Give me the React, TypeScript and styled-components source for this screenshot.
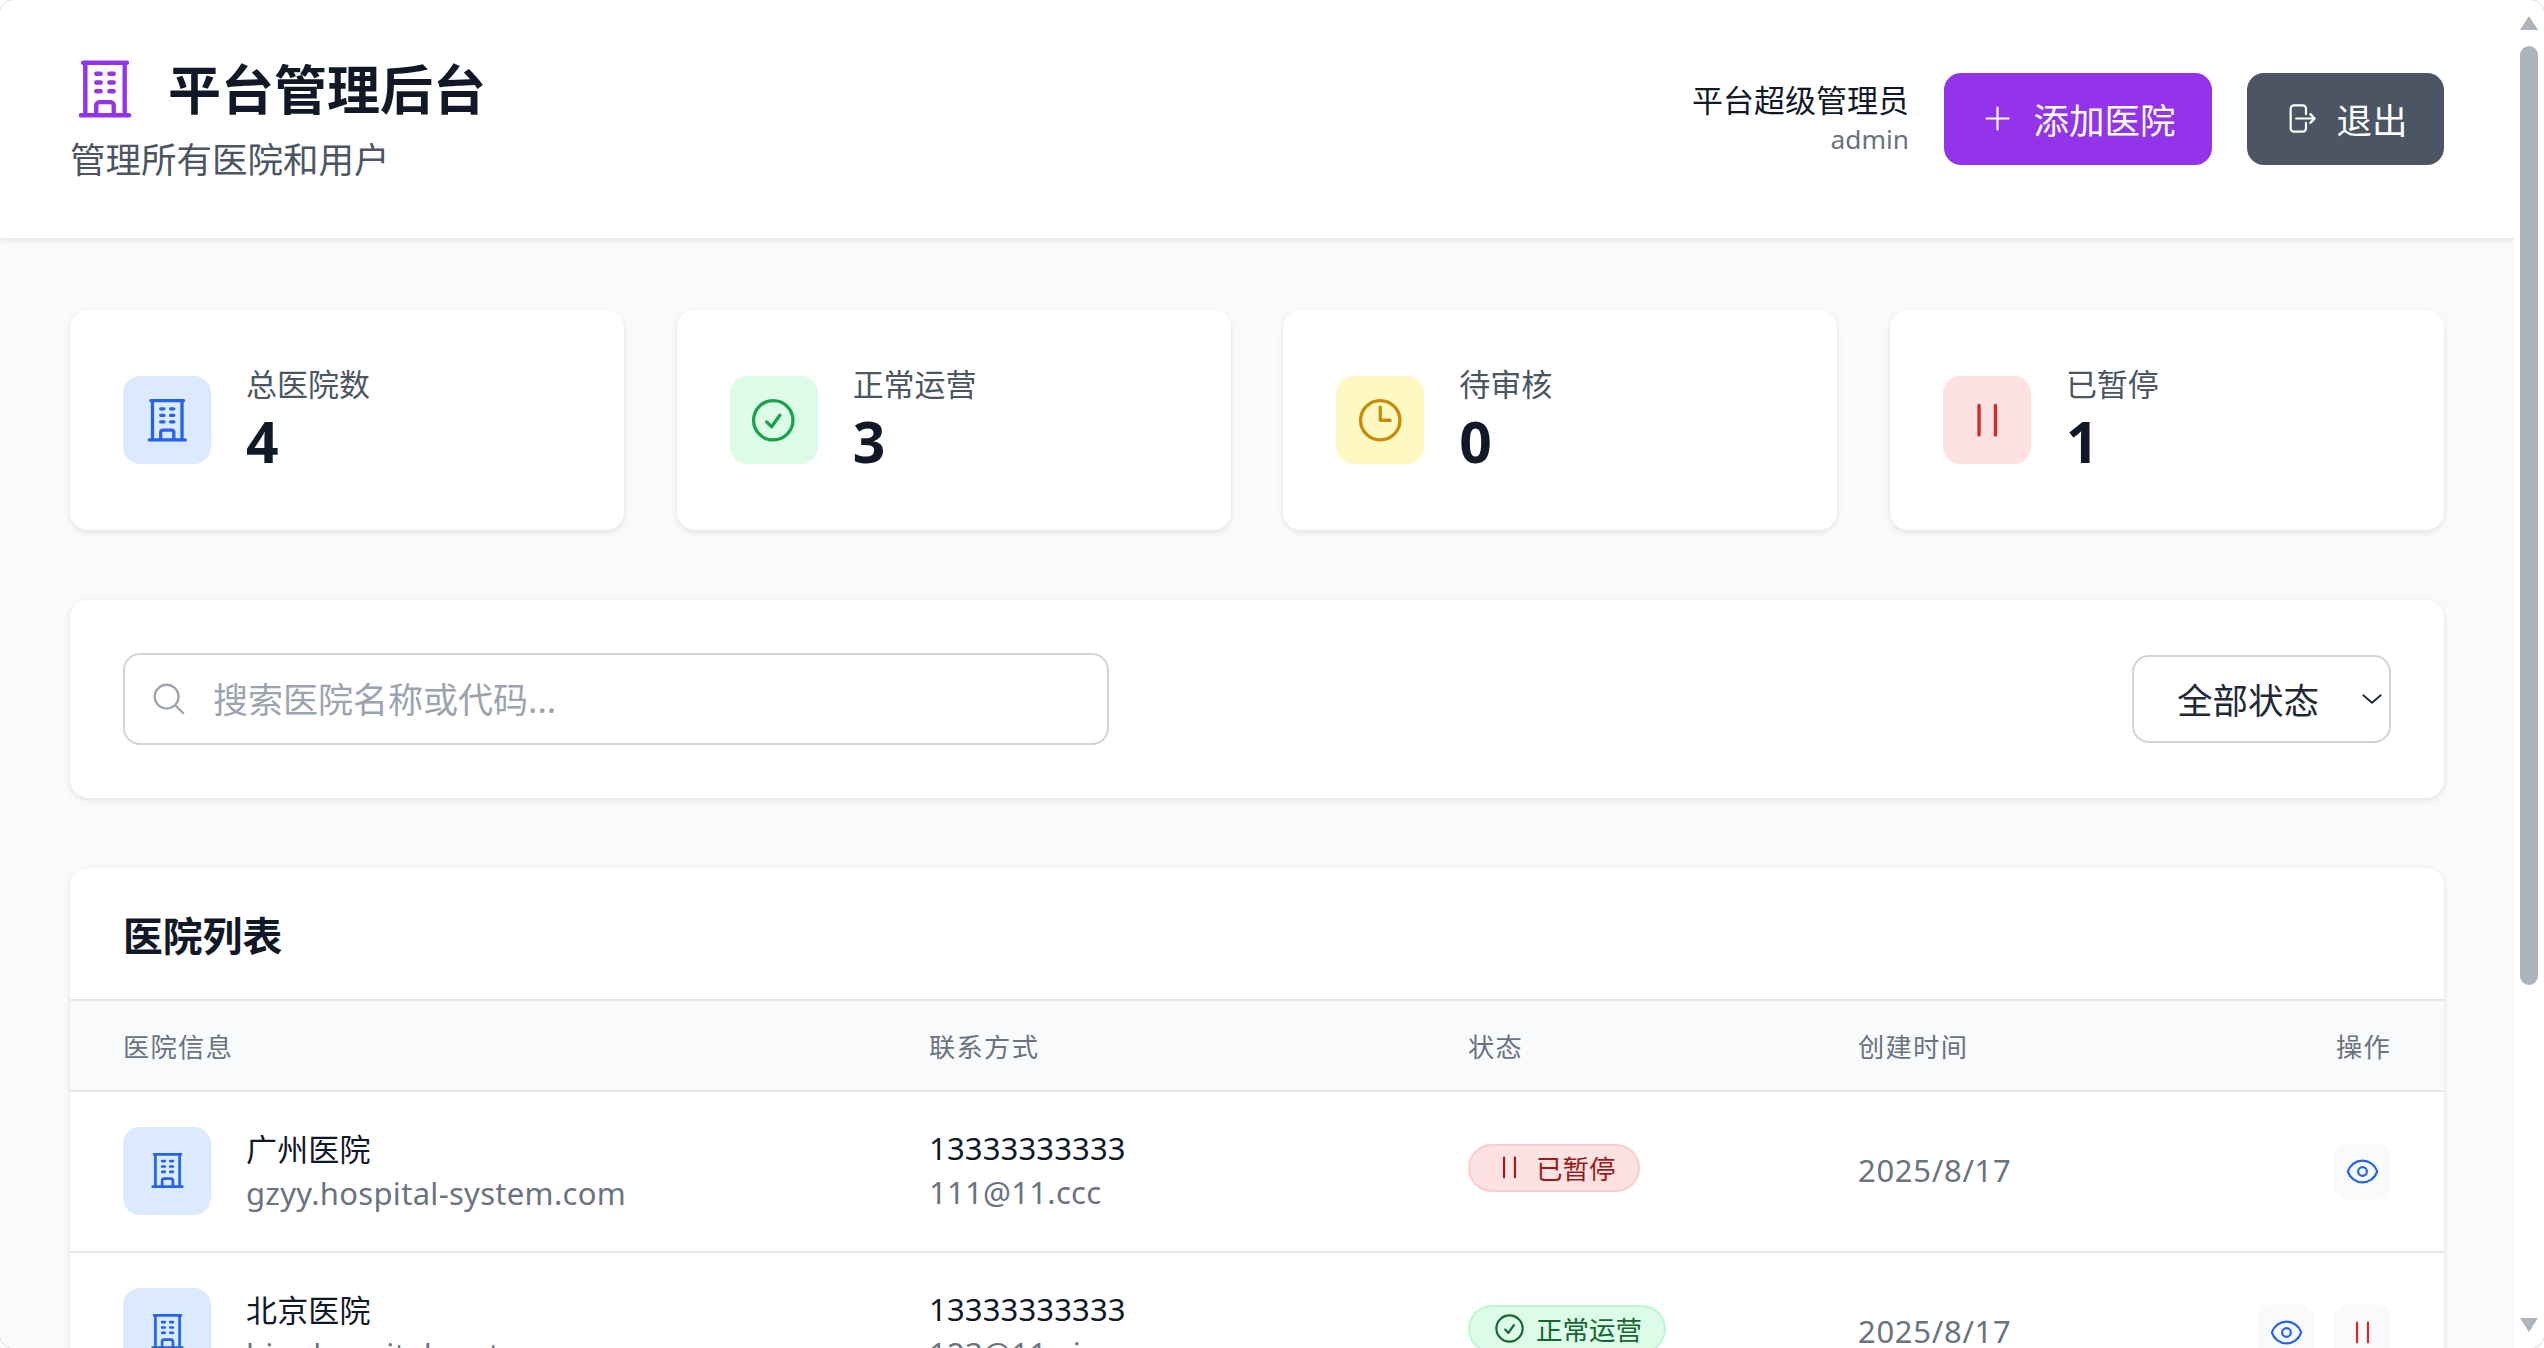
import React from 'react';
import styled, { createGlobalStyle } from 'styled-components';

const Global = createGlobalStyle`
  html, body { margin: 0; height: 100%; overflow: hidden; background: #fff; }
  #root { height: 100%; }
  * { box-sizing: border-box; }
  body { font-family: "Noto Sans", "Noto Sans CJK SC", sans-serif; color: #111827; }
`;

const PATHS = {
  building: 'M3.75 21h16.5M4.5 3h15M5.25 3v18m13.5-18v18M9 6.75h1.5m-1.5 3h1.5m-1.5 3h1.5m3-6H15m-1.5 3H15m-1.5 3H15M9 21v-3.375c0-.621.504-1.125 1.125-1.125h3.75c.621 0 1.125.504 1.125 1.125V21',
  check: 'M9 12.75 11.25 15 15 9.75M21 12a9 9 0 1 1-18 0 9 9 0 0 1 18 0Z',
  clock: 'M12 6v6h4.5m4.5 0a9 9 0 1 1-18 0 9 9 0 0 1 18 0Z',
  pause: 'M15.75 5.25v13.5m-7.5-13.5v13.5',
  plus: 'M12 4.5v15m7.5-7.5h-15',
  logout: 'M15.75 9V5.25A2.25 2.25 0 0 0 13.5 3h-6a2.25 2.25 0 0 0-2.25 2.25v13.5A2.25 2.25 0 0 0 7.5 21h6a2.25 2.25 0 0 0 2.25-2.25V15m3 0 3-3m0 0-3-3m3 3H9',
  eye: 'M2.036 12.322a1.012 1.012 0 0 1 0-.639C3.423 7.51 7.36 4.5 12 4.5c4.638 0 8.573 3.007 9.963 7.178.07.207.07.431 0 .639C20.577 16.49 16.64 19.5 12 19.5c-4.638 0-8.573-3.007-9.963-7.178ZM15 12a3 3 0 1 1-6 0 3 3 0 0 1 6 0Z',
  search: 'm21 21-5.197-5.197m0 0A7.5 7.5 0 1 0 5.196 5.196a7.5 7.5 0 0 0 10.607 10.607Z',
  chevron: 'm5 9 7 6 7-6',
};

const Svg = styled.svg<{ $size: number; $color: string }>`
  width: ${p => p.$size}px;
  height: ${p => p.$size}px;
  flex: none;
  display: block;
  fill: none;
  stroke: ${p => p.$color};
  stroke-width: 1.5;
  stroke-linecap: round;
  stroke-linejoin: round;
`;

const Icon = ({ name, size, color }: { name: keyof typeof PATHS; size: number; color: string }) => (
  <Svg viewBox="0 0 24 24" $size={size} $color={color}><path d={PATHS[name]} /></Svg>
);

const Window = styled.div`
  height: 1348px;
  display: flex;
  background: #fff;
  border-radius: 14px;
  overflow: hidden;
  box-shadow: 0 0 0 1px #d8dade;
`;
const Page = styled.div`
  width: 2514px;
  height: 100%;
  flex: none;
  overflow: hidden;
  background: #f9fafb;
`;
const ScrollRail = styled.div`
  width: 30px;
  flex: none;
  display: flex;
  flex-direction: column;
  align-items: flex-start;
  padding: 16px 0 0 6px;
  background: #fff;
`;
const ArrowUp = styled.div`
  width: 18px;
  height: 14px;
  background: #aeb4bc;
  clip-path: polygon(50% 0, 100% 100%, 0 100%);
`;
const ArrowDown = styled(ArrowUp)`
  clip-path: polygon(0 0, 100% 0, 50% 100%);
  margin-top: 333px;
`;
const Thumb = styled.div`
  width: 18px;
  height: 939px;
  margin-top: 16px;
  border-radius: 9px;
  background: #aeb4bc;
`;

const Header = styled.header`
  height: 238px;
  padding: 0 70px;
  display: flex;
  align-items: center;
  justify-content: space-between;
  background: #fff;
  box-shadow: 0 2px 6px rgba(0, 0, 0, 0.1);
`;
const Brand = styled.div`
  display: flex;
  flex-direction: column;
`;
const TitleRow = styled.div`
  display: flex;
  align-items: center;
  gap: 28px;
  height: 70px;
`;
const Title = styled.h1`
  margin: 2px 0 0;
  font-size: 53px;
  line-height: 70px;
  font-weight: 700;
  color: #111827;
`;
const Subtitle = styled.p`
  margin: 9px 0 0;
  font-size: 35.5px;
  line-height: 52px;
  color: #4b5563;
`;
const Actions = styled.div`
  display: flex;
  align-items: center;
  gap: 35px;
`;
const User = styled.div`
  margin-bottom: 3px;
  text-align: right;
`;
const UserName = styled.div`
  font-size: 31px;
  line-height: 44px;
  color: #111827;
`;
const UserLogin = styled.div`
  font-size: 26.25px;
  line-height: 35px;
  color: #6b7280;
`;
const Button = styled.button<{ $bg: string }>`
  height: 92px;
  padding: 0 36.5px 2px;
  display: flex;
  align-items: center;
  gap: 18px;
  border: 0;
  border-radius: 17px;
  background: ${p => p.$bg};
  color: #fff;
  font: inherit;
  font-size: 35.5px;
`;

const Main = styled.main`
  padding: 72px 70px 0;
  display: flex;
  flex-direction: column;
  gap: 70px;
`;
const Stats = styled.section`
  display: grid;
  grid-template-columns: repeat(4, 1fr);
  gap: 52.5px;
`;
const Panel = styled.section`
  background: #fff;
  border-radius: 18px;
  box-shadow: 0 2px 6px rgba(0, 0, 0, 0.1);
`;
const StatCard = styled(Panel)`
  height: 220px;
  padding: 0 53px;
  display: flex;
  align-items: center;
  gap: 35px;
`;
const IconBox = styled.div<{ $bg: string }>`
  width: 88px;
  height: 88px;
  flex: none;
  display: flex;
  align-items: center;
  justify-content: center;
  border-radius: 17px;
  background: ${p => p.$bg};
`;
const StatText = styled.div`
  margin-bottom: 2px;
`;
const StatLabel = styled.div`
  font-size: 31px;
  line-height: 44px;
  color: #4b5563;
`;
const StatValue = styled.div`
  font-size: 57px;
  line-height: 70px;
  font-weight: 700;
  color: #111827;
`;

const Filter = styled(Panel)`
  height: 198px;
  padding: 0 53px;
  display: flex;
  align-items: center;
  justify-content: space-between;
`;
const SearchBox = styled.div`
  position: relative;
  width: 986px;
  height: 92px;
`;
const SearchIcon = styled.span`
  position: absolute;
  left: 27px;
  top: 27px;
`;
const SearchInput = styled.input`
  width: 100%;
  height: 100%;
  padding: 0 20px 0 88px;
  border: 2px solid #d1d5db;
  border-radius: 17px;
  background: #fff;
  outline: none;
  font: inherit;
  font-size: 35px;
  color: #111827;
  &::placeholder { color: #9ca3af; opacity: 1; }
`;
const SelectBox = styled.div`
  position: relative;
  width: 259px;
  height: 88px;
`;
const Select = styled.select`
  width: 100%;
  height: 100%;
  padding: 2px 0 0 43px;
  border: 2px solid #d1d5db;
  border-radius: 17px;
  background: #fff;
  appearance: none;
  font: inherit;
  font-size: 35.5px;
  color: #1f2937;
`;
const Chevron = styled.span`
  position: absolute;
  right: 4.5px;
  top: 29px;
`;

const ListTitleBar = styled.div`
  height: 133px;
  padding: 0 53px;
  display: flex;
  align-items: center;
  border-bottom: 2px solid #e5e7eb;
`;
const ListTitle = styled.h2`
  margin: 0;
  font-size: 39.8px;
  font-weight: 700;
  color: #111827;
`;
const grid = `
  display: grid;
  grid-template-columns: 806px 539px 390px 1fr;
  align-items: center;
  padding: 0 53px;
  border-bottom: 2px solid #e5e7eb;
`;
const TableHead = styled.div`
  ${grid}
  height: 91px;
  background: #f9fafb;
  font-size: 26.25px;
  letter-spacing: 1.3px;
  color: #6b7280;
`;
const HeadLast = styled.div`
  display: flex;
  justify-content: space-between;
`;
const Row = styled.div`
  ${grid}
  height: 161px;
  background: #fff;
`;
const HospitalCell = styled.div`
  display: flex;
  align-items: center;
  gap: 35px;
  margin-bottom: 2px;
`;
const ContactCell = styled.div`
  margin-bottom: 3px;
`;
const Primary = styled.div`
  font-size: 31px;
  line-height: 44px;
  letter-spacing: 0.15px;
  color: #111827;
`;
const Secondary = styled.div`
  font-size: 31px;
  line-height: 44px;
  letter-spacing: 0.3px;
  color: #6b7280;
`;
const DateText = styled(Secondary)`
  margin-bottom: 3px;
  letter-spacing: 0.7px;
`;
const Badge = styled.div<{ $bg: string; $line: string; $fg: string }>`
  display: inline-flex;
  align-items: center;
  gap: 9px;
  height: 48px;
  margin-bottom: 8px;
  padding: 0 22px;
  border: 2px solid ${p => p.$line};
  border-radius: 24px;
  background: ${p => p.$bg};
  color: ${p => p.$fg};
  font-size: 26.5px;
  justify-self: start;
`;
const LastCell = styled.div`
  display: flex;
  align-items: center;
  justify-content: space-between;
`;
const RowActions = styled.div`
  display: flex;
  justify-content: flex-end;
  gap: 18px;
`;
const IconButton = styled.button`
  width: 58px;
  height: 57px;
  padding: 0;
  display: flex;
  align-items: center;
  justify-content: center;
  border: 0;
  border-radius: 17px;
  background: #f9fafb;
`;

const STATS = [
  { label: '总医院数', value: '4', icon: 'building', bg: '#dbeafe', color: '#2563eb' },
  { label: '正常运营', value: '3', icon: 'check', bg: '#dcfce7', color: '#16a34a' },
  { label: '待审核', value: '0', icon: 'clock', bg: '#fef9c3', color: '#ca8a04' },
  { label: '已暂停', value: '1', icon: 'pause', bg: '#fee2e2', color: '#dc2626' },
] as const;

const ROWS = [
  { name: '广州医院', site: 'gzyy.hospital-system.com', phone: '13333333333', mail: '111@11.ccc', active: false },
  { name: '北京医院', site: 'bjyy.hospital-system.com', phone: '13333333333', mail: '123@11.xin', active: true },
];

export default function App() {
  return (
    <Window>
      <Global />
      <Page>
        <Header>
          <Brand>
            <TitleRow>
              <Icon name="building" size={70} color="#9333ea" />
              <Title>平台管理后台</Title>
            </TitleRow>
            <Subtitle>管理所有医院和用户</Subtitle>
          </Brand>
          <Actions>
            <User>
              <UserName>平台超级管理员</UserName>
              <UserLogin>admin</UserLogin>
            </User>
            <Button $bg="#9333ea"><Icon name="plus" size={35} color="#fff" />添加医院</Button>
            <Button $bg="#4b5563"><Icon name="logout" size={35} color="#fff" />退出</Button>
          </Actions>
        </Header>
        <Main>
          <Stats>
            {STATS.map(s => (
              <StatCard key={s.label}>
                <IconBox $bg={s.bg}><Icon name={s.icon} size={52.5} color={s.color} /></IconBox>
                <StatText>
                  <StatLabel>{s.label}</StatLabel>
                  <StatValue>{s.value}</StatValue>
                </StatText>
              </StatCard>
            ))}
          </Stats>
          <Filter>
            <SearchBox>
              <SearchIcon><Icon name="search" size={38} color="#9ca3af" /></SearchIcon>
              <SearchInput placeholder="搜索医院名称或代码..." />
            </SearchBox>
            <SelectBox>
              <Select defaultValue="all">
                <option value="all">全部状态</option>
              </Select>
              <Chevron><Icon name="chevron" size={30} color="#1f2937" /></Chevron>
            </SelectBox>
          </Filter>
          <Panel>
            <ListTitleBar><ListTitle>医院列表</ListTitle></ListTitleBar>
            <TableHead>
              <div>医院信息</div>
              <div>联系方式</div>
              <div>状态</div>
              <HeadLast>
                <div>创建时间</div>
                <div>操作</div>
              </HeadLast>
            </TableHead>
            {ROWS.map(r => (
              <Row key={r.name}>
                <HospitalCell>
                  <IconBox $bg="#dbeafe"><Icon name="building" size={43} color="#2563eb" /></IconBox>
                  <div>
                    <Primary>{r.name}</Primary>
                    <Secondary>{r.site}</Secondary>
                  </div>
                </HospitalCell>
                <ContactCell>
                  <Primary>{r.phone}</Primary>
                  <Secondary>{r.mail}</Secondary>
                </ContactCell>
                {r.active ? (
                  <Badge $bg="#dcfce7" $line="#bbf7d0" $fg="#166534">
                    <Icon name="check" size={35} color="#166534" />正常运营
                  </Badge>
                ) : (
                  <Badge $bg="#fee2e2" $line="#fecaca" $fg="#991b1b">
                    <Icon name="pause" size={35} color="#991b1b" />已暂停
                  </Badge>
                )}
                <LastCell>
                  <DateText>2025/8/17</DateText>
                  <RowActions>
                    <IconButton><Icon name="eye" size={35} color="#2563eb" /></IconButton>
                    {r.active && <IconButton><Icon name="pause" size={35} color="#dc2626" /></IconButton>}
                  </RowActions>
                </LastCell>
              </Row>
            ))}
          </Panel>
        </Main>
      </Page>
      <ScrollRail>
        <ArrowUp />
        <Thumb />
        <ArrowDown />
      </ScrollRail>
    </Window>
  );
}
